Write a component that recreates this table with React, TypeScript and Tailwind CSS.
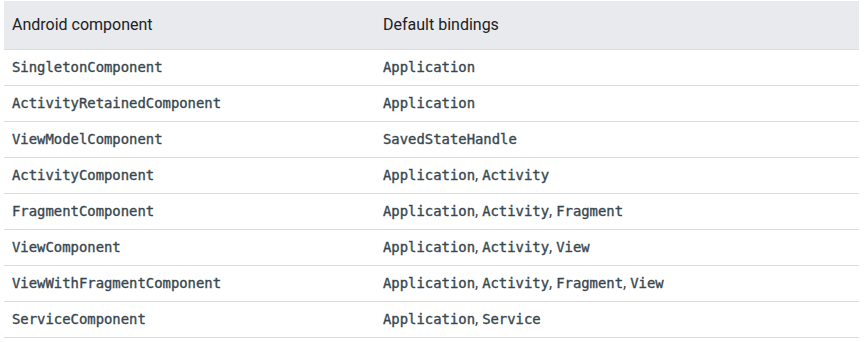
import React from "react";

const rows: [string, string[]][] = [
  ["SingletonComponent", ["Application"]],
  ["ActivityRetainedComponent", ["Application"]],
  ["ViewModelComponent", ["SavedStateHandle"]],
  ["ActivityComponent", ["Application", "Activity"]],
  ["FragmentComponent", ["Application", "Activity", "Fragment"]],
  ["ViewComponent", ["Application", "Activity", "View"]],
  ["ViewWithFragmentComponent", ["Application", "Activity", "Fragment", "View"]],
  ["ServiceComponent", ["Application", "Service"]],
];

const code =
  "font-['DejaVu_Sans_Mono',monospace] text-[13.9px] text-[#37474f] [-webkit-text-stroke:0.35px_#37474f]";

export default function App() {
  return (
    <div className="bg-white w-[866px] h-[342px] pt-px pl-1 font-['Roboto',sans-serif] text-[#202124]">
      <table className="w-[855px] border-collapse">
        <thead>
          <tr className="bg-[#e8eaed] h-12 border-b border-[#dadce0]">
            <th className="w-[371px] text-left font-normal text-[16px] pl-2">Android component</th>
            <th className="text-left font-normal text-[16px] pl-2">Default bindings</th>
          </tr>
        </thead>
        <tbody>
          {rows.map(([c, b]) => (
            <tr key={c} className="h-9 border-b border-[#dadce0]">
              <td className="pl-2">
                <span className={code}>{c}</span>
              </td>
              <td className="pl-2 text-[16px] text-[#37474f]">
                {b.map((x, i) => (
                  <React.Fragment key={x}>
                    {i > 0 && ", "}
                    <span className={code}>{x}</span>
                  </React.Fragment>
                ))}
              </td>
            </tr>
          ))}
        </tbody>
      </table>
    </div>
  );
}
